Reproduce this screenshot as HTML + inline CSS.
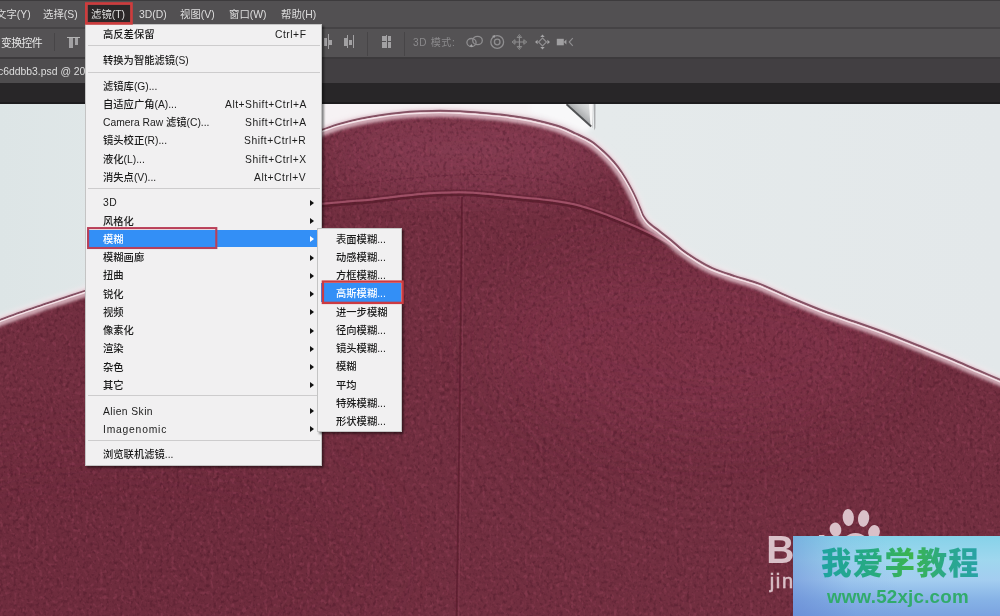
<!DOCTYPE html>
<html lang="zh-CN"><head><meta charset="utf-8"><title>Photoshop 滤镜 模糊 高斯模糊</title>
<style>
html,body{margin:0;padding:0;}
body{width:1000px;height:616px;overflow:hidden;position:relative;background:#792d43;
 font-family:"Liberation Sans","Noto Sans CJK SC",sans-serif;}
.abs{position:absolute;}
.mb,.mi,.sc,.tx{will-change:transform;}
.mb{position:absolute;top:0.5px;height:28px;line-height:28px;font-size:10.4px;color:#dedede;white-space:nowrap;}
.menu{position:absolute;background:#f1f0f1;border:1px solid #c4c4c4;box-sizing:border-box;box-shadow:1.5px 1.5px 2px rgba(0,0,0,.45);}
.mi{position:absolute;font-size:10.3px;font-weight:500;color:#1b1b1b;white-space:nowrap;height:18px;line-height:18px;}
.sc{position:absolute;font-size:10.3px;color:#1b1b1b;white-space:nowrap;height:18px;line-height:18px;text-align:right;letter-spacing:0.52px;}
.sep{position:absolute;height:1px;background:#cdcccd;}
.arr{position:absolute;width:0;height:0;border-left:4px solid #111;border-top:3.5px solid transparent;border-bottom:3.5px solid transparent;}
.g{position:absolute;background:#a2a1a3;}
</style></head><body>
<svg class="abs" style="left:0;top:103px" width="1000" height="513" viewBox="0 103 1000 513">
<defs>
<filter id="b3" x="-10%" y="-10%" width="120%" height="120%"><feGaussianBlur stdDeviation="2.6"/></filter>
<filter id="b2" x="-10%" y="-10%" width="120%" height="120%"><feGaussianBlur stdDeviation="1.7"/></filter>
<filter id="b1" x="-10%" y="-10%" width="120%" height="120%"><feGaussianBlur stdDeviation="0.6"/></filter>
<filter id="b20" x="-30%" y="-30%" width="160%" height="160%"><feGaussianBlur stdDeviation="28"/></filter>
<filter id="grain" x="0" y="0" width="100%" height="100%" color-interpolation-filters="sRGB">
<feTurbulence type="fractalNoise" baseFrequency="0.30 0.26" numOctaves="2" seed="7" result="n"/>
<feColorMatrix in="n" type="matrix" values="0 0 0 0 0.200  0 0 0 0 0.040  0 0 0 0 0.100  2.500 2.500 0 0 -2.450"/>
</filter>
<filter id="grainL" x="0" y="0" width="100%" height="100%" color-interpolation-filters="sRGB">
<feTurbulence type="fractalNoise" baseFrequency="0.28 0.24" numOctaves="2" seed="23" result="n"/>
<feColorMatrix in="n" type="matrix" values="0 0 0 0 0.640  0 0 0 0 0.290  0 0 0 0 0.390  2.500 2.500 0 0 -2.550"/>
</filter>
<linearGradient id="bg" x1="0" y1="0" x2="1" y2="0"><stop offset="0" stop-color="#dde5e6"/><stop offset="0.1" stop-color="#e0e7e8"/><stop offset="0.6" stop-color="#e5eaeb"/><stop offset="1" stop-color="#e3e8ea"/></linearGradient>
<linearGradient id="hg" x1="0" y1="1" x2="1" y2="0"><stop offset="0.35" stop-color="#8f9193"/><stop offset="0.7" stop-color="#c9cbcc"/><stop offset="1" stop-color="#e6e7e8"/></linearGradient>
<radialGradient id="rip" gradientUnits="userSpaceOnUse" cx="720" cy="290" r="5.5" spreadMethod="reflect"><stop offset="0" stop-color="#2a0812" stop-opacity="0.10"/><stop offset="1" stop-color="#c0708a" stop-opacity="0.08"/></radialGradient>
<radialGradient id="rmg" cx="0.5" cy="0.5" r="0.5"><stop offset="0.3" stop-color="#fff"/><stop offset="1" stop-color="#000"/></radialGradient>
<mask id="rm" maskUnits="userSpaceOnUse" x="330" y="290" width="540" height="360"><ellipse cx="600" cy="470" rx="260" ry="170" fill="url(#rmg)"/></mask>
<path id="edge" d="M-6,323 C-5.0,322.6 -4.3,322.2 0,320.6 C4.3,319.0 13.0,315.7 20,313.2 C27.0,310.7 34.7,308.1 42,305.6 C49.3,303.1 57.0,300.7 64,298.4 C71.0,296.1 80.3,293.0 84,291.8 C87.7,290.6 85.7,291.1 86,291 L322,130.5 C325.0,129.5 333.7,126.3 340,124.5 C346.3,122.7 353.3,120.9 360,119.5 C366.7,118.1 373.3,117.0 380,116 C386.7,115.0 393.3,114.1 400,113.4 C406.7,112.7 413.3,112.3 420,112 C426.7,111.7 433.3,111.4 440,111.4 C446.7,111.4 453.3,111.7 460,112 C466.7,112.3 473.3,112.9 480,113.4 C486.7,113.9 493.3,114.4 500,115.2 C506.7,116.0 513.3,116.9 520,118 C526.7,119.1 533.3,120.4 540,122 C546.7,123.6 554.2,125.5 560,127.5 C565.8,129.5 569.8,131.6 575,134 C580.2,136.4 586.1,138.8 591,142 C595.9,145.2 600.5,149.6 604.3,153 C608.0,156.4 610.6,159.2 613.5,162.5 C616.4,165.8 618.8,169.0 621.5,173 C624.2,177.0 627.2,182.2 629.5,186.5 C631.8,190.8 633.9,195.0 635.5,198.5 C637.1,202.0 638.1,204.7 639.3,207.5 C640.5,210.3 642.0,214.2 642.5,215.5  C643.4,216.8 645.2,220.2 648,223 C650.8,225.8 655.7,229.0 659.5,232 C663.3,235.0 667.2,237.9 671,241 C674.8,244.1 677.8,247.3 682,250.5 C686.2,253.7 691.0,256.9 696,260 C701.0,263.1 705.6,266.0 712,268.8 C718.4,271.6 726.4,274.1 734.4,276.8 C742.4,279.5 750.4,281.1 760,284.8 C769.6,288.5 781.3,294.5 792,299 C802.7,303.5 813.3,308.0 824,312 C834.7,316.0 845.3,319.3 856,323 C866.7,326.7 877.3,330.4 888,334.4 C898.7,338.4 909.3,342.7 920,347 C930.7,351.3 942.4,356.0 952,360 C961.6,364.0 968.6,367.2 977.6,371 C986.6,374.8 1001.3,381.0 1006,383"/>
<path id="pipe" d="M322,204 C325.8,203.7 337.0,202.7 345,202 C353.0,201.3 361.7,200.8 370,200 C378.3,199.2 386.7,197.9 395,197 C403.3,196.1 412.5,195.0 420,194.3 C427.5,193.6 433.3,193.3 440,193 C446.7,192.7 453.3,192.4 460,192.5 C466.7,192.6 474.0,193.1 480,193.5 C486.0,193.9 489.3,194.3 496,195 C502.7,195.7 510.7,196.6 520,197.6 C529.3,198.6 542.0,199.4 552,200.8 C562.0,202.2 570.7,203.6 580,206 C589.3,208.4 598.7,212.0 608,215.5 C617.3,219.0 626.7,222.8 636,227 C645.3,231.2 655.6,236.3 664,241 C672.4,245.7 680.5,251.3 686.5,255 C692.5,258.7 697.8,261.7 700,263"/>
<clipPath id="jc"><path d="M-6,323 C-5.0,322.6 -4.3,322.2 0,320.6 C4.3,319.0 13.0,315.7 20,313.2 C27.0,310.7 34.7,308.1 42,305.6 C49.3,303.1 57.0,300.7 64,298.4 C71.0,296.1 80.3,293.0 84,291.8 C87.7,290.6 85.7,291.1 86,291 L322,130.5 C325.0,129.5 333.7,126.3 340,124.5 C346.3,122.7 353.3,120.9 360,119.5 C366.7,118.1 373.3,117.0 380,116 C386.7,115.0 393.3,114.1 400,113.4 C406.7,112.7 413.3,112.3 420,112 C426.7,111.7 433.3,111.4 440,111.4 C446.7,111.4 453.3,111.7 460,112 C466.7,112.3 473.3,112.9 480,113.4 C486.7,113.9 493.3,114.4 500,115.2 C506.7,116.0 513.3,116.9 520,118 C526.7,119.1 533.3,120.4 540,122 C546.7,123.6 554.2,125.5 560,127.5 C565.8,129.5 569.8,131.6 575,134 C580.2,136.4 586.1,138.8 591,142 C595.9,145.2 600.5,149.6 604.3,153 C608.0,156.4 610.6,159.2 613.5,162.5 C616.4,165.8 618.8,169.0 621.5,173 C624.2,177.0 627.2,182.2 629.5,186.5 C631.8,190.8 633.9,195.0 635.5,198.5 C637.1,202.0 638.1,204.7 639.3,207.5 C640.5,210.3 642.0,214.2 642.5,215.5  C643.4,216.8 645.2,220.2 648,223 C650.8,225.8 655.7,229.0 659.5,232 C663.3,235.0 667.2,237.9 671,241 C674.8,244.1 677.8,247.3 682,250.5 C686.2,253.7 691.0,256.9 696,260 C701.0,263.1 705.6,266.0 712,268.8 C718.4,271.6 726.4,274.1 734.4,276.8 C742.4,279.5 750.4,281.1 760,284.8 C769.6,288.5 781.3,294.5 792,299 C802.7,303.5 813.3,308.0 824,312 C834.7,316.0 845.3,319.3 856,323 C866.7,326.7 877.3,330.4 888,334.4 C898.7,338.4 909.3,342.7 920,347 C930.7,351.3 942.4,356.0 952,360 C961.6,364.0 968.6,367.2 977.6,371 C986.6,374.8 1001.3,381.0 1006,383 L1006,622 L-6,622 Z"/></clipPath>
</defs>
<rect x="0" y="103" width="1000" height="513" fill="url(#bg)"/>
<!-- white haze above collar on the left -->
<path d="M322,100 L540,100 L540,118 L500,113 L440,109.500 L400,111.500 L360,117.500 L322,129 Z" fill="#f6f2f4" filter="url(#b2)"/>
<!-- silver hanger piece -->
<path d="M530,100 L592,100 L592,128 L584,133 L560,124 L530,114 Z" fill="#f8f8f9" filter="url(#b3)"/>
<path d="M567,104 L593,104 L593,128 Z" fill="url(#hg)" filter="url(#b1)"/>
<path d="M589,104 L592.500,104 L592.500,128 L590.500,126 Z" fill="#f7f7f7" filter="url(#b1)"/>
<path d="M566.500,104.300 L591.200,126.5" stroke="#505153" stroke-width="1.9" fill="none" filter="url(#b1)"/>
<path d="M593.600,103.500 L595.500,103.500 L595.400,128 L594.200,130.500 Z" fill="#a9abad" filter="url(#b1)"/>
<!-- outer glow -->
<use href="#edge" fill="none" stroke="#f3e8ec" stroke-width="9" filter="url(#b3)"/>
<use href="#edge" fill="none" stroke="#c58fa0" stroke-width="4.5" opacity="0.5" filter="url(#b2)"/>
<!-- jacket body -->
<g clip-path="url(#jc)">
<rect x="-6" y="100" width="1012" height="522" fill="#722f40"/>
<ellipse cx="690" cy="345" rx="200" ry="85" fill="#82364b" opacity="0.65" filter="url(#b20)"/>
<ellipse cx="470" cy="150" rx="150" ry="38" fill="#8a3f56" opacity="0.85" filter="url(#b20)"/>
<ellipse cx="120" cy="560" rx="260" ry="110" fill="#672839" opacity="0.32" filter="url(#b20)"/>
<rect x="-6" y="100" width="1012" height="522" filter="url(#grain)" opacity="0.26"/>
<rect x="-6" y="100" width="1012" height="522" filter="url(#grainL)" opacity="0.32"/>
<ellipse cx="600" cy="470" rx="260" ry="170" fill="url(#rip)" mask="url(#rm)" opacity="0.5"/>
<!-- piping seam under collar -->
<use href="#pipe" fill="none" stroke="#571a2b" stroke-width="2.6" opacity="0.75" transform="translate(0,2.200)" filter="url(#b1)"/>
<use href="#pipe" fill="none" stroke="#5f2033" stroke-width="1.4" opacity="0.6" transform="translate(0,-2.300)" filter="url(#b1)"/>
<use href="#pipe" fill="none" stroke="#a6566d" stroke-width="2" opacity="0.85" transform="translate(0,-0.300)" filter="url(#b1)"/>
<!-- stitch line on collar -->
<path d="M322,190 C380,180 440,174.500 480,174.500 C530,175 580,185 612,200" fill="none" stroke="#5d1d33" stroke-width="1.1" stroke-dasharray="2.500 1.8" opacity="0.45"/>
<!-- vertical centre seam -->
<path d="M462,197 C461,300 459,480 456.500,616" fill="none" stroke="#581a2c" stroke-width="1.6" opacity="0.7" filter="url(#b1)"/>
<path d="M464,197 C463,300 461,480 458.500,616" fill="none" stroke="#8e4257" stroke-width="1" opacity="0.5" filter="url(#b1)"/>
<!-- inner light band along the rim -->
<use href="#edge" fill="none" stroke="#eccfd8" stroke-width="11" opacity="0.75" filter="url(#b2)"/>
</g>
<!-- dark outline + crisp white rim -->
<use href="#edge" fill="none" stroke="#5e2338" stroke-width="1.8" opacity="0.7" transform="translate(0.300,-0.800)" filter="url(#b1)"/>
<use href="#edge" fill="none" stroke="#fbeef2" stroke-width="1.4" opacity="0.85" transform="translate(-0.400,1.200)" filter="url(#b1)"/>
<!-- Baidu jingyan watermark -->
<g fill="#e2ccd3" opacity="0.93">
<ellipse cx="835.5" cy="529.5" rx="5.8" ry="7" transform="rotate(-12 835.500 529.500)"/>
<ellipse cx="848.3" cy="517.5" rx="5.6" ry="8.4" transform="rotate(-4 848.300 517.500)"/>
<ellipse cx="863.6" cy="518.5" rx="5.6" ry="8.4" transform="rotate(6 863.600 518.500)"/>
<ellipse cx="874" cy="532" rx="5.8" ry="7" transform="rotate(14 874 532)"/>
<ellipse cx="855.5" cy="546" rx="14" ry="13"/>
<text x="766.3" y="563.4" font-family="'Liberation Sans',sans-serif" font-weight="bold" font-size="39">Bai</text>
<text x="769.8" y="588" font-family="'Liberation Sans',sans-serif" font-size="20" letter-spacing="1.6" stroke="#e2ccd3" stroke-width="0.5">jingyan</text>
</g>
</svg>
<div class="abs" style="left:0;top:0;width:1000px;height:28px;background:#525052;"></div>
<div class="abs" style="left:0;top:0;width:1000px;height:1px;background:#3d3b3d;"></div>
<div class="abs" style="left:0;top:27px;width:1000px;height:1.5px;background:#454345;"></div>
<div class="abs" style="left:0;top:28.5px;width:1000px;height:28.5px;background:#545254;"></div>
<div class="abs" style="left:0;top:57px;width:1000px;height:1.5px;background:#3c3a3c;"></div>
<div class="abs" style="left:0;top:58.5px;width:1000px;height:24px;background:#423f42;"></div>
<div class="abs" style="left:0;top:58.5px;width:300px;height:24px;background:#4e4c4e;"></div>
<div class="abs" style="left:0;top:82.5px;width:1000px;height:20.5px;background:#282628;"></div>
<div class="abs" style="left:0;top:102px;width:1000px;height:1.5px;background:#1d1c1e;"></div>
<div class="mb" style="left:-4px">文字(Y)</div><div class="mb" style="left:43px">选择(S)</div><div class="mb" style="left:90.5px">滤镜(T)</div><div class="mb" style="left:138.5px">3D(D)</div><div class="mb" style="left:179.5px">视图(V)</div><div class="mb" style="left:228.5px">窗口(W)</div><div class="mb" style="left:281px">帮助(H)</div><div class="abs" style="left:88px;top:5px;width:42px;height:17px;background:#2c2829;"></div><div class="mb" style="left:90.5px">滤镜(T)</div><div class="abs tx" style="left:0.5px;top:29.3px;height:28px;line-height:28px;font-size:10.9px;letter-spacing:-0.6px;color:#e6e6e6;white-space:nowrap;">变换控件</div>
<div class="abs tx" style="left:-2.5px;top:58.5px;height:25px;line-height:25px;font-size:10.4px;color:#dedede;white-space:nowrap;">c6ddbb3.psd @ 20</div>
<div class="abs tx" style="left:413px;top:29px;height:28px;line-height:28px;font-size:10px;letter-spacing:0.7px;color:#8b8a8c;white-space:nowrap;">3D 模式:</div>
<div class="abs" style="left:54px;top:33px;width:1px;height:18px;background:#474547;"></div>
<div class="g" style="left:67px;top:37px;width:13px;height:1px;background:#b5b5b5"></div>
<div class="g" style="left:69px;top:38px;width:3.5px;height:10px;"></div>
<div class="g" style="left:74.5px;top:38px;width:3px;height:6.5px;"></div>
<div class="g" style="left:328px;top:33.5px;width:1px;height:15px;"></div>
<div class="g" style="left:324px;top:38px;width:3px;height:8px;"></div>
<div class="g" style="left:329px;top:40px;width:2.5px;height:5px;"></div>
<div class="g" style="left:344px;top:37.5px;width:3px;height:8px;"></div>
<div class="g" style="left:347px;top:34.5px;width:1px;height:13.5px;"></div>
<div class="g" style="left:349px;top:39.5px;width:3px;height:5.5px;"></div>
<div class="g" style="left:352.5px;top:34.5px;width:1px;height:13.5px;"></div>
<div class="abs" style="left:367px;top:32px;width:1px;height:24px;background:#474547;"></div>
<div class="g" style="left:382px;top:36px;width:3.5px;height:4.5px;"></div>
<div class="g" style="left:382px;top:41.5px;width:3.5px;height:6px;"></div>
<div class="g" style="left:386px;top:35px;width:1px;height:13px;"></div>
<div class="g" style="left:387.8px;top:36px;width:3.5px;height:4.5px;"></div>
<div class="g" style="left:387.8px;top:41.5px;width:3.5px;height:6px;"></div>
<div class="abs" style="left:404px;top:32px;width:1px;height:24px;background:#474547;"></div>
<svg class="abs" style="left:460px;top:30px" width="120" height="25" viewBox="460 30 120 25" fill="none" stroke="#8f8e90" stroke-width="1.3">
<ellipse cx="471.5" cy="42.5" rx="4.6" ry="4"/><ellipse cx="477.5" cy="40.5" rx="4.8" ry="4.2"/><path d="M469.500,46.500l2,-2.500l1.500,3z" fill="#a5a4a6" stroke="none"/>
<circle cx="497.2" cy="42" r="6.4"/><circle cx="497.2" cy="42" r="2.8"/><path d="M492,36l3,-1l-0.500,3z" fill="#a5a4a6" stroke="none"/>
<path d="M519.400,36v12M513.400,42h12" stroke-width="1.1"/><path d="M519.400,34.500l2.300,3h-4.600zM519.400,49.500l2.300,-3h-4.600zM512,42l3,-2.300v4.600zM526.800,42l-3,-2.300v4.600z" stroke-width="0.9"/>
<path d="M542.500,38l4,4l-4,4l-4,-4z" stroke-width="1.1"/><path d="M542.500,34.500l2.200,2.600h-4.400zM542.500,49.500l2.200,-2.600h-4.400zM535,42l2.600,-2.200v4.400zM550,42l-2.600,-2.200v4.400z" fill="#a5a4a6" stroke="none"/>
<rect x="556.8" y="38.8" width="7" height="6.5" fill="#a09fa1" stroke="none"/><path d="M563.800,42l2.600,-2.400v4.800z" fill="#a09fa1" stroke="none"/><path d="M572.800,38.200l-3.600,3.800l3.600,3.8" stroke-width="1.1"/>
</svg>
<div class="menu" style="left:84.5px;top:23.5px;width:237.5px;height:442px;"><div class="mi" style="left:17.5px;top:1.2px;">高反差保留</div><div class="sc" style="right:14.5px;top:1.2px;">Ctrl+F</div><div class="mi" style="left:17.5px;top:27.2px;">转换为智能滤镜(S)</div><div class="mi" style="left:17.5px;top:53.1px;">滤镜库(G)...</div><div class="mi" style="left:17.5px;top:71.2px;">自适应广角(A)...</div><div class="sc" style="right:14.5px;top:71.2px;">Alt+Shift+Ctrl+A</div><div class="mi" style="left:17.5px;top:89.6px;">Camera Raw 滤镜(C)...</div><div class="sc" style="right:14.5px;top:89.6px;">Shift+Ctrl+A</div><div class="mi" style="left:17.5px;top:107.8px;">镜头校正(R)...</div><div class="sc" style="right:14.5px;top:107.8px;">Shift+Ctrl+R</div><div class="mi" style="left:17.5px;top:126.1px;">液化(L)...</div><div class="sc" style="right:14.5px;top:126.1px;">Shift+Ctrl+X</div><div class="mi" style="left:17.5px;top:144.4px;">消失点(V)...</div><div class="sc" style="right:14.5px;top:144.4px;">Alt+Ctrl+V</div><div class="mi" style="left:17.5px;top:169.9px;letter-spacing:0.4px;">3D</div><div class="arr" style="left:224.5px;top:175.4px;"></div><div class="mi" style="left:17.5px;top:188.15px;">风格化</div><div class="arr" style="left:224.5px;top:193.65px;"></div><div class="abs" style="left:1.5px;top:205.1px;width:233.5px;height:17px;background:#338ff6;"></div><div class="mi" style="left:17.5px;top:206.4px;color:#fff;">模糊</div><div class="arr" style="left:224.5px;top:211.9px;border-left-color:#fff;"></div><div class="mi" style="left:17.5px;top:224.65px;">模糊画廊</div><div class="arr" style="left:224.5px;top:230.15px;"></div><div class="mi" style="left:17.5px;top:242.9px;">扭曲</div><div class="arr" style="left:224.5px;top:248.4px;"></div><div class="mi" style="left:17.5px;top:261.15px;">锐化</div><div class="arr" style="left:224.5px;top:266.65px;"></div><div class="mi" style="left:17.5px;top:279.4px;">视频</div><div class="arr" style="left:224.5px;top:284.9px;"></div><div class="mi" style="left:17.5px;top:297.65px;">像素化</div><div class="arr" style="left:224.5px;top:303.15px;"></div><div class="mi" style="left:17.5px;top:315.9px;">渲染</div><div class="arr" style="left:224.5px;top:321.4px;"></div><div class="mi" style="left:17.5px;top:334.15px;">杂色</div><div class="arr" style="left:224.5px;top:339.65px;"></div><div class="mi" style="left:17.5px;top:352.4px;">其它</div><div class="arr" style="left:224.5px;top:357.9px;"></div><div class="mi" style="left:17.5px;top:378.1px;letter-spacing:0.42px;">Alien Skin</div><div class="arr" style="left:224.5px;top:383.6px;"></div><div class="mi" style="left:17.5px;top:396.3px;letter-spacing:0.8px;">Imagenomic</div><div class="arr" style="left:224.5px;top:401.8px;"></div><div class="mi" style="left:17.5px;top:421.1px;">浏览联机滤镜...</div><div class="sep" style="left:2px;width:232.5px;top:20.6px"></div><div class="sep" style="left:2px;width:232.5px;top:47.2px"></div><div class="sep" style="left:2px;width:232.5px;top:163.7px"></div><div class="sep" style="left:2px;width:232.5px;top:370.7px"></div><div class="sep" style="left:2px;width:232.5px;top:415.1px"></div></div>
<svg class="abs" style="left:80px;top:220px" width="150" height="36" viewBox="80 220 150 36"><rect x="88.1" y="228.1" width="128.2" height="19.9" fill="none" stroke="#b93f58" stroke-width="2.1"/></svg>
<div class="menu" style="left:317px;top:228px;width:85px;height:203.5px;"><div class="mi" style="left:18px;top:1.7px;">表面模糊...</div><div class="mi" style="left:18px;top:19.95px;">动感模糊...</div><div class="mi" style="left:18px;top:38.2px;">方框模糊...</div><div class="abs" style="left:3px;top:54px;width:80px;height:19px;background:#338ff6;"></div><div class="mi" style="left:18px;top:56.45px; color:#fff;">高斯模糊...</div><div class="mi" style="left:18px;top:74.7px;">进一步模糊</div><div class="mi" style="left:18px;top:92.95px;">径向模糊...</div><div class="mi" style="left:18px;top:111.2px;">镜头模糊...</div><div class="mi" style="left:18px;top:129.45px;">模糊</div><div class="mi" style="left:18px;top:147.7px;">平均</div><div class="mi" style="left:18px;top:165.95px;">特殊模糊...</div><div class="mi" style="left:18px;top:184.2px;">形状模糊...</div></div>
<svg class="abs" style="left:315px;top:275px" width="95" height="35" viewBox="315 275 95 35"><rect x="322.9" y="281.6" width="79.7" height="21.3" fill="none" stroke="#cc3a42" stroke-width="2.4"/></svg>
<svg class="abs" style="left:80px;top:0" width="60" height="28" viewBox="80 0 60 28"><rect x="86.3" y="3.5" width="45.2" height="19.9" fill="none" stroke="#cf3b3c" stroke-width="2.6"/></svg>
<div class="abs" style="left:793px;top:536.3px;width:207px;height:80px;background:linear-gradient(180deg,#86d2e9 0%,#9fd7ee 30%,#a3cdf0 55%,#86b2e6 80%,#7aa3e0 100%);"></div>
<div class="abs" style="left:793px;top:536.3px;width:207px;height:80px;background:linear-gradient(75deg,rgba(96,128,208,0.55) 0%,rgba(110,150,220,0.15) 28%,rgba(120,170,230,0) 50%);"></div>
<div class="abs tx" style="left:820.5px;top:543.3px;width:175px;height:40px;line-height:40px;font-size:30.5px;font-weight:900;letter-spacing:1.3px;white-space:nowrap;color:#21a58f;background:linear-gradient(90deg,#1fa3a0 0%,#27aa80 30%,#3bb44e 52%,#2aa88c 72%,#279fb4 100%);-webkit-background-clip:text;background-clip:text;-webkit-text-fill-color:transparent;">我爱学教程</div>
<div class="abs tx" style="left:827px;top:585.3px;width:160px;height:24px;line-height:24px;font-size:18.8px;font-weight:bold;letter-spacing:0.2px;color:#31ab6c;white-space:nowrap;">www.52xjc.com</div>
</body></html>
